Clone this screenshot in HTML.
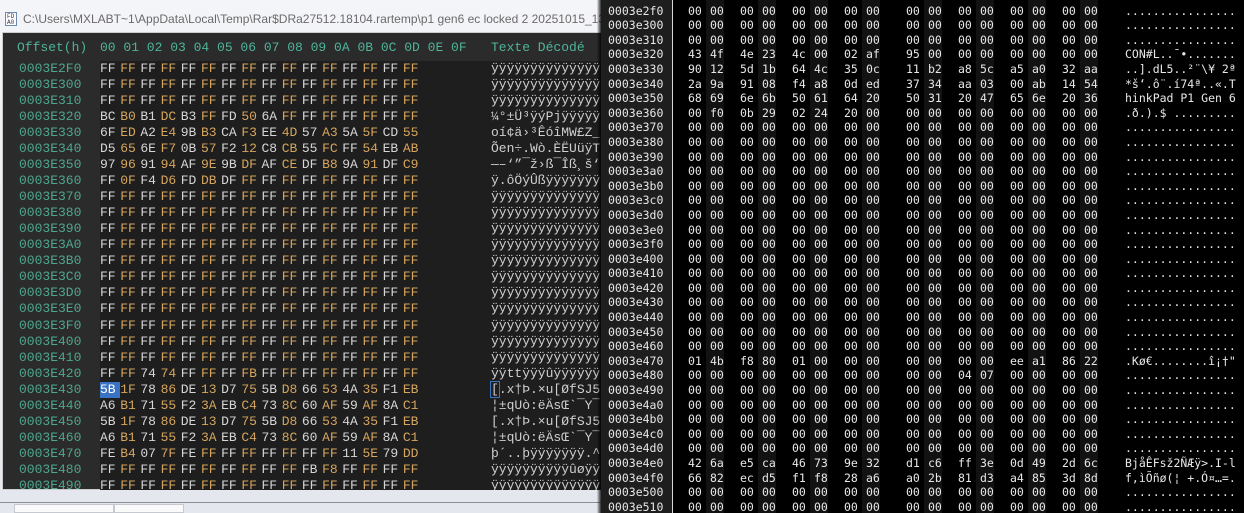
<!DOCTYPE html>
<html><head><meta charset="utf-8"><style>
*{margin:0;padding:0;box-sizing:border-box}
body{width:1244px;height:513px;overflow:hidden;background:#000;position:relative}
#L{position:absolute;left:0;top:0;width:601px;height:513px;background:linear-gradient(#f4f5f8,#e6e9ef);overflow:hidden}
#title{position:absolute;left:23px;top:12px;font:12px "Liberation Sans",sans-serif;color:#6a6a6a;white-space:nowrap}
#ico{position:absolute;left:5px;top:12px;width:12px;height:14px;border:1px solid #6a8ab0;background:#fff;font:6px "Liberation Mono",monospace;color:#335;line-height:6px;padding:1px 0 0 1px}
#panel{position:absolute;left:2px;top:32px;width:600px;height:458px;background:#2b2b2b;border:1px solid #ccc;border-right:none}
#data{position:absolute;left:97px;top:28px;width:510px;height:430px;background:#1e1e1e}
.hdr{position:absolute;top:7px;font:13px "Liberation Mono",monospace;color:#4fb49a;white-space:pre}
#rows{position:absolute;left:0;top:28px;font:13px "Liberation Mono",monospace}
.r{position:relative;height:16.04px;line-height:16.04px;white-space:pre}
.r .a{position:absolute;left:16px;color:#4fa68c}
.r .h{position:absolute;left:97px}
.r .t{position:absolute;left:488px;color:#cfcfcf}
.h i,.h b{display:inline-block;width:20.2px;font-style:normal;font-weight:normal}
.h i{color:#d6d6d6}.h b{color:#d6a55e}
.sel{background:#3a72c4;color:#fff!important}
#bot{position:absolute;left:0;top:490px;width:601px;height:23px;background:#e4e7ee}
#bot .ln{position:absolute;left:0;top:12px;width:601px;height:1px;background:#8a8f99}
#bot .tab{position:absolute;top:14px;height:9px;background:#fafafa;border:1px solid #c6c9cf}
#shadow{position:absolute;left:597px;top:0;width:5px;height:513px;background:linear-gradient(90deg,rgba(0,0,0,0.05),#000)}
#R{position:absolute;left:601px;top:0;width:643px;height:513px;background:#000;overflow:hidden}
#addr{position:absolute;left:0;top:0;width:72px;height:513px;background:#1e1e1e;border-right:1px solid #d8d8d8}
.st{position:absolute;top:0;width:18px;height:513px;background:#121212}
#rr{position:absolute;left:0;top:-11px;font:11.5px "DejaVu Sans Mono",monospace;color:#e8e8e8}
.q{position:relative;height:14.6px;line-height:14.6px;white-space:pre}
.q .a{position:absolute;left:7px}
.q .t{position:absolute;left:524px}
.q .h{position:absolute;left:87px}
.q .h span{display:inline-block;width:22px}
.q .h span:nth-child(2n){margin-right:8px}
.q .h span:nth-child(8){margin-right:18px}
</style></head><body>
<div id="L">
<div id="ico">FD<br>A0</div>
<div id="title">C:\Users\MXLABT~1\AppData\Local\Temp\Rar$DRa27512.18104.rartemp\p1 gen6 ec locked 2 20251015_130215</div>
<div id="panel">
<div id="data"></div>
<div class="hdr" style="left:14px">Offset(h)</div>
<div class="hdr" style="left:97px">00 01 02 03 04 05 06 07 08 09 0A 0B 0C 0D 0E 0F</div>
<div class="hdr" style="left:488px">Texte Décodé</div>
<div id="rows">
<div class="r"><span class="a">0003E2F0</span><span class="h"><i>FF</i><b>FF</b><i>FF</i><b>FF</b><i>FF</i><b>FF</b><i>FF</i><b>FF</b><i>FF</i><b>FF</b><i>FF</i><b>FF</b><i>FF</i><b>FF</b><i>FF</i><b>FF</b></span><span class="t">ÿÿÿÿÿÿÿÿÿÿÿÿÿÿÿÿ</span></div>
<div class="r"><span class="a">0003E300</span><span class="h"><i>FF</i><b>FF</b><i>FF</i><b>FF</b><i>FF</i><b>FF</b><i>FF</i><b>FF</b><i>FF</i><b>FF</b><i>FF</i><b>FF</b><i>FF</i><b>FF</b><i>FF</i><b>FF</b></span><span class="t">ÿÿÿÿÿÿÿÿÿÿÿÿÿÿÿÿ</span></div>
<div class="r"><span class="a">0003E310</span><span class="h"><i>FF</i><b>FF</b><i>FF</i><b>FF</b><i>FF</i><b>FF</b><i>FF</i><b>FF</b><i>FF</i><b>FF</b><i>FF</i><b>FF</b><i>FF</i><b>FF</b><i>FF</i><b>FF</b></span><span class="t">ÿÿÿÿÿÿÿÿÿÿÿÿÿÿÿÿ</span></div>
<div class="r"><span class="a">0003E320</span><span class="h"><i>BC</i><b>B0</b><i>B1</i><b>DC</b><i>B3</i><b>FF</b><i>FD</i><b>50</b><i>6A</i><b>FF</b><i>FF</i><b>FF</b><i>FF</i><b>FF</b><i>FF</i><b>FF</b></span><span class="t">¼°±Ü³ÿýPjÿÿÿÿÿÿÿ</span></div>
<div class="r"><span class="a">0003E330</span><span class="h"><i>6F</i><b>ED</b><i>A2</i><b>E4</b><i>9B</i><b>B3</b><i>CA</i><b>F3</b><i>EE</i><b>4D</b><i>57</i><b>A3</b><i>5A</i><b>5F</b><i>CD</i><b>55</b></span><span class="t">oí¢ä›³ÊóîMW£Z_ÍU</span></div>
<div class="r"><span class="a">0003E340</span><span class="h"><i>D5</i><b>65</b><i>6E</i><b>F7</b><i>0B</i><b>57</b><i>F2</i><b>12</b><i>C8</i><b>CB</b><i>55</i><b>FC</b><i>FF</i><b>54</b><i>EB</i><b>AB</b></span><span class="t">Õen÷.Wò.ÈËUüÿTë«</span></div>
<div class="r"><span class="a">0003E350</span><span class="h"><i>97</i><b>96</b><i>91</i><b>94</b><i>AF</i><b>9E</b><i>9B</i><b>DF</b><i>AF</i><b>CE</b><i>DF</i><b>B8</b><i>9A</i><b>91</b><i>DF</i><b>C9</b></span><span class="t">—–‘”¯ž›ß¯Îß¸š‘ßÉ</span></div>
<div class="r"><span class="a">0003E360</span><span class="h"><i>FF</i><b>0F</b><i>F4</i><b>D6</b><i>FD</i><b>DB</b><i>DF</i><b>FF</b><i>FF</i><b>FF</b><i>FF</i><b>FF</b><i>FF</i><b>FF</b><i>FF</i><b>FF</b></span><span class="t">ÿ.ôÖýÛßÿÿÿÿÿÿÿÿÿ</span></div>
<div class="r"><span class="a">0003E370</span><span class="h"><i>FF</i><b>FF</b><i>FF</i><b>FF</b><i>FF</i><b>FF</b><i>FF</i><b>FF</b><i>FF</i><b>FF</b><i>FF</i><b>FF</b><i>FF</i><b>FF</b><i>FF</i><b>FF</b></span><span class="t">ÿÿÿÿÿÿÿÿÿÿÿÿÿÿÿÿ</span></div>
<div class="r"><span class="a">0003E380</span><span class="h"><i>FF</i><b>FF</b><i>FF</i><b>FF</b><i>FF</i><b>FF</b><i>FF</i><b>FF</b><i>FF</i><b>FF</b><i>FF</i><b>FF</b><i>FF</i><b>FF</b><i>FF</i><b>FF</b></span><span class="t">ÿÿÿÿÿÿÿÿÿÿÿÿÿÿÿÿ</span></div>
<div class="r"><span class="a">0003E390</span><span class="h"><i>FF</i><b>FF</b><i>FF</i><b>FF</b><i>FF</i><b>FF</b><i>FF</i><b>FF</b><i>FF</i><b>FF</b><i>FF</i><b>FF</b><i>FF</i><b>FF</b><i>FF</i><b>FF</b></span><span class="t">ÿÿÿÿÿÿÿÿÿÿÿÿÿÿÿÿ</span></div>
<div class="r"><span class="a">0003E3A0</span><span class="h"><i>FF</i><b>FF</b><i>FF</i><b>FF</b><i>FF</i><b>FF</b><i>FF</i><b>FF</b><i>FF</i><b>FF</b><i>FF</i><b>FF</b><i>FF</i><b>FF</b><i>FF</i><b>FF</b></span><span class="t">ÿÿÿÿÿÿÿÿÿÿÿÿÿÿÿÿ</span></div>
<div class="r"><span class="a">0003E3B0</span><span class="h"><i>FF</i><b>FF</b><i>FF</i><b>FF</b><i>FF</i><b>FF</b><i>FF</i><b>FF</b><i>FF</i><b>FF</b><i>FF</i><b>FF</b><i>FF</i><b>FF</b><i>FF</i><b>FF</b></span><span class="t">ÿÿÿÿÿÿÿÿÿÿÿÿÿÿÿÿ</span></div>
<div class="r"><span class="a">0003E3C0</span><span class="h"><i>FF</i><b>FF</b><i>FF</i><b>FF</b><i>FF</i><b>FF</b><i>FF</i><b>FF</b><i>FF</i><b>FF</b><i>FF</i><b>FF</b><i>FF</i><b>FF</b><i>FF</i><b>FF</b></span><span class="t">ÿÿÿÿÿÿÿÿÿÿÿÿÿÿÿÿ</span></div>
<div class="r"><span class="a">0003E3D0</span><span class="h"><i>FF</i><b>FF</b><i>FF</i><b>FF</b><i>FF</i><b>FF</b><i>FF</i><b>FF</b><i>FF</i><b>FF</b><i>FF</i><b>FF</b><i>FF</i><b>FF</b><i>FF</i><b>FF</b></span><span class="t">ÿÿÿÿÿÿÿÿÿÿÿÿÿÿÿÿ</span></div>
<div class="r"><span class="a">0003E3E0</span><span class="h"><i>FF</i><b>FF</b><i>FF</i><b>FF</b><i>FF</i><b>FF</b><i>FF</i><b>FF</b><i>FF</i><b>FF</b><i>FF</i><b>FF</b><i>FF</i><b>FF</b><i>FF</i><b>FF</b></span><span class="t">ÿÿÿÿÿÿÿÿÿÿÿÿÿÿÿÿ</span></div>
<div class="r"><span class="a">0003E3F0</span><span class="h"><i>FF</i><b>FF</b><i>FF</i><b>FF</b><i>FF</i><b>FF</b><i>FF</i><b>FF</b><i>FF</i><b>FF</b><i>FF</i><b>FF</b><i>FF</i><b>FF</b><i>FF</i><b>FF</b></span><span class="t">ÿÿÿÿÿÿÿÿÿÿÿÿÿÿÿÿ</span></div>
<div class="r"><span class="a">0003E400</span><span class="h"><i>FF</i><b>FF</b><i>FF</i><b>FF</b><i>FF</i><b>FF</b><i>FF</i><b>FF</b><i>FF</i><b>FF</b><i>FF</i><b>FF</b><i>FF</i><b>FF</b><i>FF</i><b>FF</b></span><span class="t">ÿÿÿÿÿÿÿÿÿÿÿÿÿÿÿÿ</span></div>
<div class="r"><span class="a">0003E410</span><span class="h"><i>FF</i><b>FF</b><i>FF</i><b>FF</b><i>FF</i><b>FF</b><i>FF</i><b>FF</b><i>FF</i><b>FF</b><i>FF</i><b>FF</b><i>FF</i><b>FF</b><i>FF</i><b>FF</b></span><span class="t">ÿÿÿÿÿÿÿÿÿÿÿÿÿÿÿÿ</span></div>
<div class="r"><span class="a">0003E420</span><span class="h"><i>FF</i><b>FF</b><i>74</i><b>74</b><i>FF</i><b>FF</b><i>FF</i><b>FB</b><i>FF</i><b>FF</b><i>FF</i><b>FF</b><i>FF</i><b>FF</b><i>FF</i><b>FF</b></span><span class="t">ÿÿttÿÿÿûÿÿÿÿÿÿÿÿ</span></div>
<div class="r"><span class="a">0003E430</span><span class="h"><i class="sel">5B</i><b>1F</b><i>78</i><b>86</b><i>DE</i><b>13</b><i>D7</i><b>75</b><i>5B</i><b>D8</b><i>66</i><b>53</b><i>4A</i><b>35</b><i>F1</i><b>EB</b></span><span class="t"><span style="outline:1px solid #3a72c4">[</span>.x†Þ.×u[ØfSJ5ñë</span></div>
<div class="r"><span class="a">0003E440</span><span class="h"><i>A6</i><b>B1</b><i>71</i><b>55</b><i>F2</i><b>3A</b><i>EB</i><b>C4</b><i>73</i><b>8C</b><i>60</i><b>AF</b><i>59</i><b>AF</b><i>8A</i><b>C1</b></span><span class="t">¦±qUò:ëÄsŒ`¯Y¯ŠÁ</span></div>
<div class="r"><span class="a">0003E450</span><span class="h"><i>5B</i><b>1F</b><i>78</i><b>86</b><i>DE</i><b>13</b><i>D7</i><b>75</b><i>5B</i><b>D8</b><i>66</i><b>53</b><i>4A</i><b>35</b><i>F1</i><b>EB</b></span><span class="t">[.x†Þ.×u[ØfSJ5ñë</span></div>
<div class="r"><span class="a">0003E460</span><span class="h"><i>A6</i><b>B1</b><i>71</i><b>55</b><i>F2</i><b>3A</b><i>EB</i><b>C4</b><i>73</i><b>8C</b><i>60</i><b>AF</b><i>59</i><b>AF</b><i>8A</i><b>C1</b></span><span class="t">¦±qUò:ëÄsŒ`¯Y¯ŠÁ</span></div>
<div class="r"><span class="a">0003E470</span><span class="h"><i>FE</i><b>B4</b><i>07</i><b>7F</b><i>FE</i><b>FF</b><i>FF</i><b>FF</b><i>FF</i><b>FF</b><i>FF</i><b>FF</b><i>11</i><b>5E</b><i>79</i><b>DD</b></span><span class="t">þ´..þÿÿÿÿÿÿÿ.^yÝ</span></div>
<div class="r"><span class="a">0003E480</span><span class="h"><i>FF</i><b>FF</b><i>FF</i><b>FF</b><i>FF</i><b>FF</b><i>FF</i><b>FF</b><i>FF</i><b>FF</b><i>FB</i><b>F8</b><i>FF</i><b>FF</b><i>FF</i><b>FF</b></span><span class="t">ÿÿÿÿÿÿÿÿÿÿûøÿÿÿÿ</span></div>
<div class="r"><span class="a">0003E490</span><span class="h"><i>FF</i><b>FF</b><i>FF</i><b>FF</b><i>FF</i><b>FF</b><i>FF</i><b>FF</b><i>FF</i><b>FF</b><i>FF</i><b>FF</b><i>FF</i><b>FF</b><i>FF</i><b>FF</b></span><span class="t">ÿÿÿÿÿÿÿÿÿÿÿÿÿÿÿÿ</span></div>
</div>
</div>
<div id="bot"><div class="ln"></div><div class="tab" style="left:14px;width:100px"></div><div class="tab" style="left:114px;width:70px"></div></div>
<div id="shadow"></div>
</div>
<div id="R">
<div id="addr"></div>
<div class="st" style="left:105px"></div><div class="st" style="left:157px"></div><div class="st" style="left:209px"></div><div class="st" style="left:261px"></div>
<div class="st" style="left:323px"></div><div class="st" style="left:375px"></div><div class="st" style="left:427px"></div><div class="st" style="left:479px"></div>
<div id="rr">
<div class="q"><span class="a">0003e2e0</span><span class="h"><span>00</span><span>00</span><span>00</span><span>00</span><span>00</span><span>00</span><span>00</span><span>00</span><span>00</span><span>00</span><span>00</span><span>00</span><span>00</span><span>00</span><span>00</span><span>00</span></span><span class="t">................</span></div>
<div class="q"><span class="a">0003e2f0</span><span class="h"><span>00</span><span>00</span><span>00</span><span>00</span><span>00</span><span>00</span><span>00</span><span>00</span><span>00</span><span>00</span><span>00</span><span>00</span><span>00</span><span>00</span><span>00</span><span>00</span></span><span class="t">................</span></div>
<div class="q"><span class="a">0003e300</span><span class="h"><span>00</span><span>00</span><span>00</span><span>00</span><span>00</span><span>00</span><span>00</span><span>00</span><span>00</span><span>00</span><span>00</span><span>00</span><span>00</span><span>00</span><span>00</span><span>00</span></span><span class="t">................</span></div>
<div class="q"><span class="a">0003e310</span><span class="h"><span>00</span><span>00</span><span>00</span><span>00</span><span>00</span><span>00</span><span>00</span><span>00</span><span>00</span><span>00</span><span>00</span><span>00</span><span>00</span><span>00</span><span>00</span><span>00</span></span><span class="t">................</span></div>
<div class="q"><span class="a">0003e320</span><span class="h"><span>43</span><span>4f</span><span>4e</span><span>23</span><span>4c</span><span>00</span><span>02</span><span>af</span><span>95</span><span>00</span><span>00</span><span>00</span><span>00</span><span>00</span><span>00</span><span>00</span></span><span class="t">CON#L..¯•.......</span></div>
<div class="q"><span class="a">0003e330</span><span class="h"><span>90</span><span>12</span><span>5d</span><span>1b</span><span>64</span><span>4c</span><span>35</span><span>0c</span><span>11</span><span>b2</span><span>a8</span><span>5c</span><span>a5</span><span>a0</span><span>32</span><span>aa</span></span><span class="t">..].dL5..²¨\¥ 2ª</span></div>
<div class="q"><span class="a">0003e340</span><span class="h"><span>2a</span><span>9a</span><span>91</span><span>08</span><span>f4</span><span>a8</span><span>0d</span><span>ed</span><span>37</span><span>34</span><span>aa</span><span>03</span><span>00</span><span>ab</span><span>14</span><span>54</span></span><span class="t">*š‘.ô¨.í74ª..«.T</span></div>
<div class="q"><span class="a">0003e350</span><span class="h"><span>68</span><span>69</span><span>6e</span><span>6b</span><span>50</span><span>61</span><span>64</span><span>20</span><span>50</span><span>31</span><span>20</span><span>47</span><span>65</span><span>6e</span><span>20</span><span>36</span></span><span class="t">hinkPad P1 Gen 6</span></div>
<div class="q"><span class="a">0003e360</span><span class="h"><span>00</span><span>f0</span><span>0b</span><span>29</span><span>02</span><span>24</span><span>20</span><span>00</span><span>00</span><span>00</span><span>00</span><span>00</span><span>00</span><span>00</span><span>00</span><span>00</span></span><span class="t">.ð.).$ .........</span></div>
<div class="q"><span class="a">0003e370</span><span class="h"><span>00</span><span>00</span><span>00</span><span>00</span><span>00</span><span>00</span><span>00</span><span>00</span><span>00</span><span>00</span><span>00</span><span>00</span><span>00</span><span>00</span><span>00</span><span>00</span></span><span class="t">................</span></div>
<div class="q"><span class="a">0003e380</span><span class="h"><span>00</span><span>00</span><span>00</span><span>00</span><span>00</span><span>00</span><span>00</span><span>00</span><span>00</span><span>00</span><span>00</span><span>00</span><span>00</span><span>00</span><span>00</span><span>00</span></span><span class="t">................</span></div>
<div class="q"><span class="a">0003e390</span><span class="h"><span>00</span><span>00</span><span>00</span><span>00</span><span>00</span><span>00</span><span>00</span><span>00</span><span>00</span><span>00</span><span>00</span><span>00</span><span>00</span><span>00</span><span>00</span><span>00</span></span><span class="t">................</span></div>
<div class="q"><span class="a">0003e3a0</span><span class="h"><span>00</span><span>00</span><span>00</span><span>00</span><span>00</span><span>00</span><span>00</span><span>00</span><span>00</span><span>00</span><span>00</span><span>00</span><span>00</span><span>00</span><span>00</span><span>00</span></span><span class="t">................</span></div>
<div class="q"><span class="a">0003e3b0</span><span class="h"><span>00</span><span>00</span><span>00</span><span>00</span><span>00</span><span>00</span><span>00</span><span>00</span><span>00</span><span>00</span><span>00</span><span>00</span><span>00</span><span>00</span><span>00</span><span>00</span></span><span class="t">................</span></div>
<div class="q"><span class="a">0003e3c0</span><span class="h"><span>00</span><span>00</span><span>00</span><span>00</span><span>00</span><span>00</span><span>00</span><span>00</span><span>00</span><span>00</span><span>00</span><span>00</span><span>00</span><span>00</span><span>00</span><span>00</span></span><span class="t">................</span></div>
<div class="q"><span class="a">0003e3d0</span><span class="h"><span>00</span><span>00</span><span>00</span><span>00</span><span>00</span><span>00</span><span>00</span><span>00</span><span>00</span><span>00</span><span>00</span><span>00</span><span>00</span><span>00</span><span>00</span><span>00</span></span><span class="t">................</span></div>
<div class="q"><span class="a">0003e3e0</span><span class="h"><span>00</span><span>00</span><span>00</span><span>00</span><span>00</span><span>00</span><span>00</span><span>00</span><span>00</span><span>00</span><span>00</span><span>00</span><span>00</span><span>00</span><span>00</span><span>00</span></span><span class="t">................</span></div>
<div class="q"><span class="a">0003e3f0</span><span class="h"><span>00</span><span>00</span><span>00</span><span>00</span><span>00</span><span>00</span><span>00</span><span>00</span><span>00</span><span>00</span><span>00</span><span>00</span><span>00</span><span>00</span><span>00</span><span>00</span></span><span class="t">................</span></div>
<div class="q"><span class="a">0003e400</span><span class="h"><span>00</span><span>00</span><span>00</span><span>00</span><span>00</span><span>00</span><span>00</span><span>00</span><span>00</span><span>00</span><span>00</span><span>00</span><span>00</span><span>00</span><span>00</span><span>00</span></span><span class="t">................</span></div>
<div class="q"><span class="a">0003e410</span><span class="h"><span>00</span><span>00</span><span>00</span><span>00</span><span>00</span><span>00</span><span>00</span><span>00</span><span>00</span><span>00</span><span>00</span><span>00</span><span>00</span><span>00</span><span>00</span><span>00</span></span><span class="t">................</span></div>
<div class="q"><span class="a">0003e420</span><span class="h"><span>00</span><span>00</span><span>00</span><span>00</span><span>00</span><span>00</span><span>00</span><span>00</span><span>00</span><span>00</span><span>00</span><span>00</span><span>00</span><span>00</span><span>00</span><span>00</span></span><span class="t">................</span></div>
<div class="q"><span class="a">0003e430</span><span class="h"><span>00</span><span>00</span><span>00</span><span>00</span><span>00</span><span>00</span><span>00</span><span>00</span><span>00</span><span>00</span><span>00</span><span>00</span><span>00</span><span>00</span><span>00</span><span>00</span></span><span class="t">................</span></div>
<div class="q"><span class="a">0003e440</span><span class="h"><span>00</span><span>00</span><span>00</span><span>00</span><span>00</span><span>00</span><span>00</span><span>00</span><span>00</span><span>00</span><span>00</span><span>00</span><span>00</span><span>00</span><span>00</span><span>00</span></span><span class="t">................</span></div>
<div class="q"><span class="a">0003e450</span><span class="h"><span>00</span><span>00</span><span>00</span><span>00</span><span>00</span><span>00</span><span>00</span><span>00</span><span>00</span><span>00</span><span>00</span><span>00</span><span>00</span><span>00</span><span>00</span><span>00</span></span><span class="t">................</span></div>
<div class="q"><span class="a">0003e460</span><span class="h"><span>00</span><span>00</span><span>00</span><span>00</span><span>00</span><span>00</span><span>00</span><span>00</span><span>00</span><span>00</span><span>00</span><span>00</span><span>00</span><span>00</span><span>00</span><span>00</span></span><span class="t">................</span></div>
<div class="q"><span class="a">0003e470</span><span class="h"><span>01</span><span>4b</span><span>f8</span><span>80</span><span>01</span><span>00</span><span>00</span><span>00</span><span>00</span><span>00</span><span>00</span><span>00</span><span>ee</span><span>a1</span><span>86</span><span>22</span></span><span class="t">.Kø€........î¡†"</span></div>
<div class="q"><span class="a">0003e480</span><span class="h"><span>00</span><span>00</span><span>00</span><span>00</span><span>00</span><span>00</span><span>00</span><span>00</span><span>00</span><span>00</span><span>04</span><span>07</span><span>00</span><span>00</span><span>00</span><span>00</span></span><span class="t">................</span></div>
<div class="q"><span class="a">0003e490</span><span class="h"><span>00</span><span>00</span><span>00</span><span>00</span><span>00</span><span>00</span><span>00</span><span>00</span><span>00</span><span>00</span><span>00</span><span>00</span><span>00</span><span>00</span><span>00</span><span>00</span></span><span class="t">................</span></div>
<div class="q"><span class="a">0003e4a0</span><span class="h"><span>00</span><span>00</span><span>00</span><span>00</span><span>00</span><span>00</span><span>00</span><span>00</span><span>00</span><span>00</span><span>00</span><span>00</span><span>00</span><span>00</span><span>00</span><span>00</span></span><span class="t">................</span></div>
<div class="q"><span class="a">0003e4b0</span><span class="h"><span>00</span><span>00</span><span>00</span><span>00</span><span>00</span><span>00</span><span>00</span><span>00</span><span>00</span><span>00</span><span>00</span><span>00</span><span>00</span><span>00</span><span>00</span><span>00</span></span><span class="t">................</span></div>
<div class="q"><span class="a">0003e4c0</span><span class="h"><span>00</span><span>00</span><span>00</span><span>00</span><span>00</span><span>00</span><span>00</span><span>00</span><span>00</span><span>00</span><span>00</span><span>00</span><span>00</span><span>00</span><span>00</span><span>00</span></span><span class="t">................</span></div>
<div class="q"><span class="a">0003e4d0</span><span class="h"><span>00</span><span>00</span><span>00</span><span>00</span><span>00</span><span>00</span><span>00</span><span>00</span><span>00</span><span>00</span><span>00</span><span>00</span><span>00</span><span>00</span><span>00</span><span>00</span></span><span class="t">................</span></div>
<div class="q"><span class="a">0003e4e0</span><span class="h"><span>42</span><span>6a</span><span>e5</span><span>ca</span><span>46</span><span>73</span><span>9e</span><span>32</span><span>d1</span><span>c6</span><span>ff</span><span>3e</span><span>0d</span><span>49</span><span>2d</span><span>6c</span></span><span class="t">BjåÊFsž2ÑÆÿ&gt;.I-l</span></div>
<div class="q"><span class="a">0003e4f0</span><span class="h"><span>66</span><span>82</span><span>ec</span><span>d5</span><span>f1</span><span>f8</span><span>28</span><span>a6</span><span>a0</span><span>2b</span><span>81</span><span>d3</span><span>a4</span><span>85</span><span>3d</span><span>8d</span></span><span class="t">f‚ìÕñø(¦ +.Ó¤…=.</span></div>
<div class="q"><span class="a">0003e500</span><span class="h"><span>00</span><span>00</span><span>00</span><span>00</span><span>00</span><span>00</span><span>00</span><span>00</span><span>00</span><span>00</span><span>00</span><span>00</span><span>00</span><span>00</span><span>00</span><span>00</span></span><span class="t">................</span></div>
<div class="q"><span class="a">0003e510</span><span class="h"><span>00</span><span>00</span><span>00</span><span>00</span><span>00</span><span>00</span><span>00</span><span>00</span><span>00</span><span>00</span><span>00</span><span>00</span><span>00</span><span>00</span><span>00</span><span>00</span></span><span class="t">................</span></div>
</div>
</div>
</body></html>
